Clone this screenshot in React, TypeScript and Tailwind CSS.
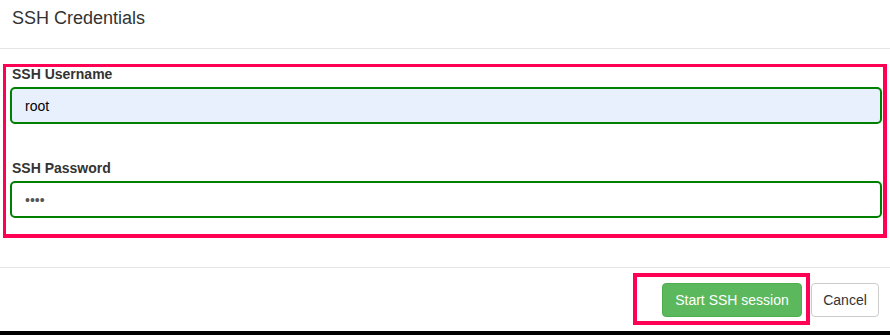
export default function App() {
  return (
    <div className="w-[890px] h-[335px] bg-white flex flex-col font-['Liberation_Sans',Arial,sans-serif] text-[#333]">
      {/* header */}
      <div className="h-[49px] border-b border-[#e5e5e5] pl-[12px] pt-[6px]">
        <h4 className="text-[18px] leading-[25px] text-[#333]">SSH Credentials</h4>
      </div>

      {/* body */}
      <div className="pt-[15px] pb-[29px] px-[3px]">
        <div className="border-[3px] border-r-[4px] border-b-[4px] border-[#ff0055] pl-[4px] pr-[1px] pb-[16px]">
          <label className="block pl-[2px] text-[14px] leading-[14px] font-bold mb-[6px]">SSH Username</label>
          <input
            readOnly
            defaultValue="root"
            className="block w-full h-[37px] border-2 border-[#008000] rounded-[5px] bg-[#e8f0fe] pl-[13px] text-[14px] text-black outline-none"
          />
          <label className="block pl-[2px] mt-[37px] text-[14px] leading-[14px] font-bold mb-[6px]">SSH Password</label>
          <input
            readOnly
            type="password"
            defaultValue="root"
            className="block w-full h-[37px] border-2 border-[#008000] rounded-[5px] bg-white pl-[13px] text-[14px] text-[#555] outline-none"
          />
        </div>
      </div>

      {/* footer */}
      <div className="border-t border-[#e5e5e5] pt-[5px] flex justify-end pr-[11px]">
        <div className="h-[52px] border-4 border-[#ff0055] pl-[25px] pr-[4px] pt-[6px]">
          <button className="h-[34px] w-[140px] rounded-[4px] bg-[#5cb85c] border border-[#4cae4c] text-white text-[14px]">
            Start SSH session
          </button>
        </div>
        <button className="mt-[10px] ml-[1px] h-[34px] w-[68px] rounded-[4px] bg-white border border-[#ccc] text-[#333] text-[14px]">
          Cancel
        </button>
      </div>

      <div className="mt-auto h-[4px] bg-black" />
    </div>
  );
}
